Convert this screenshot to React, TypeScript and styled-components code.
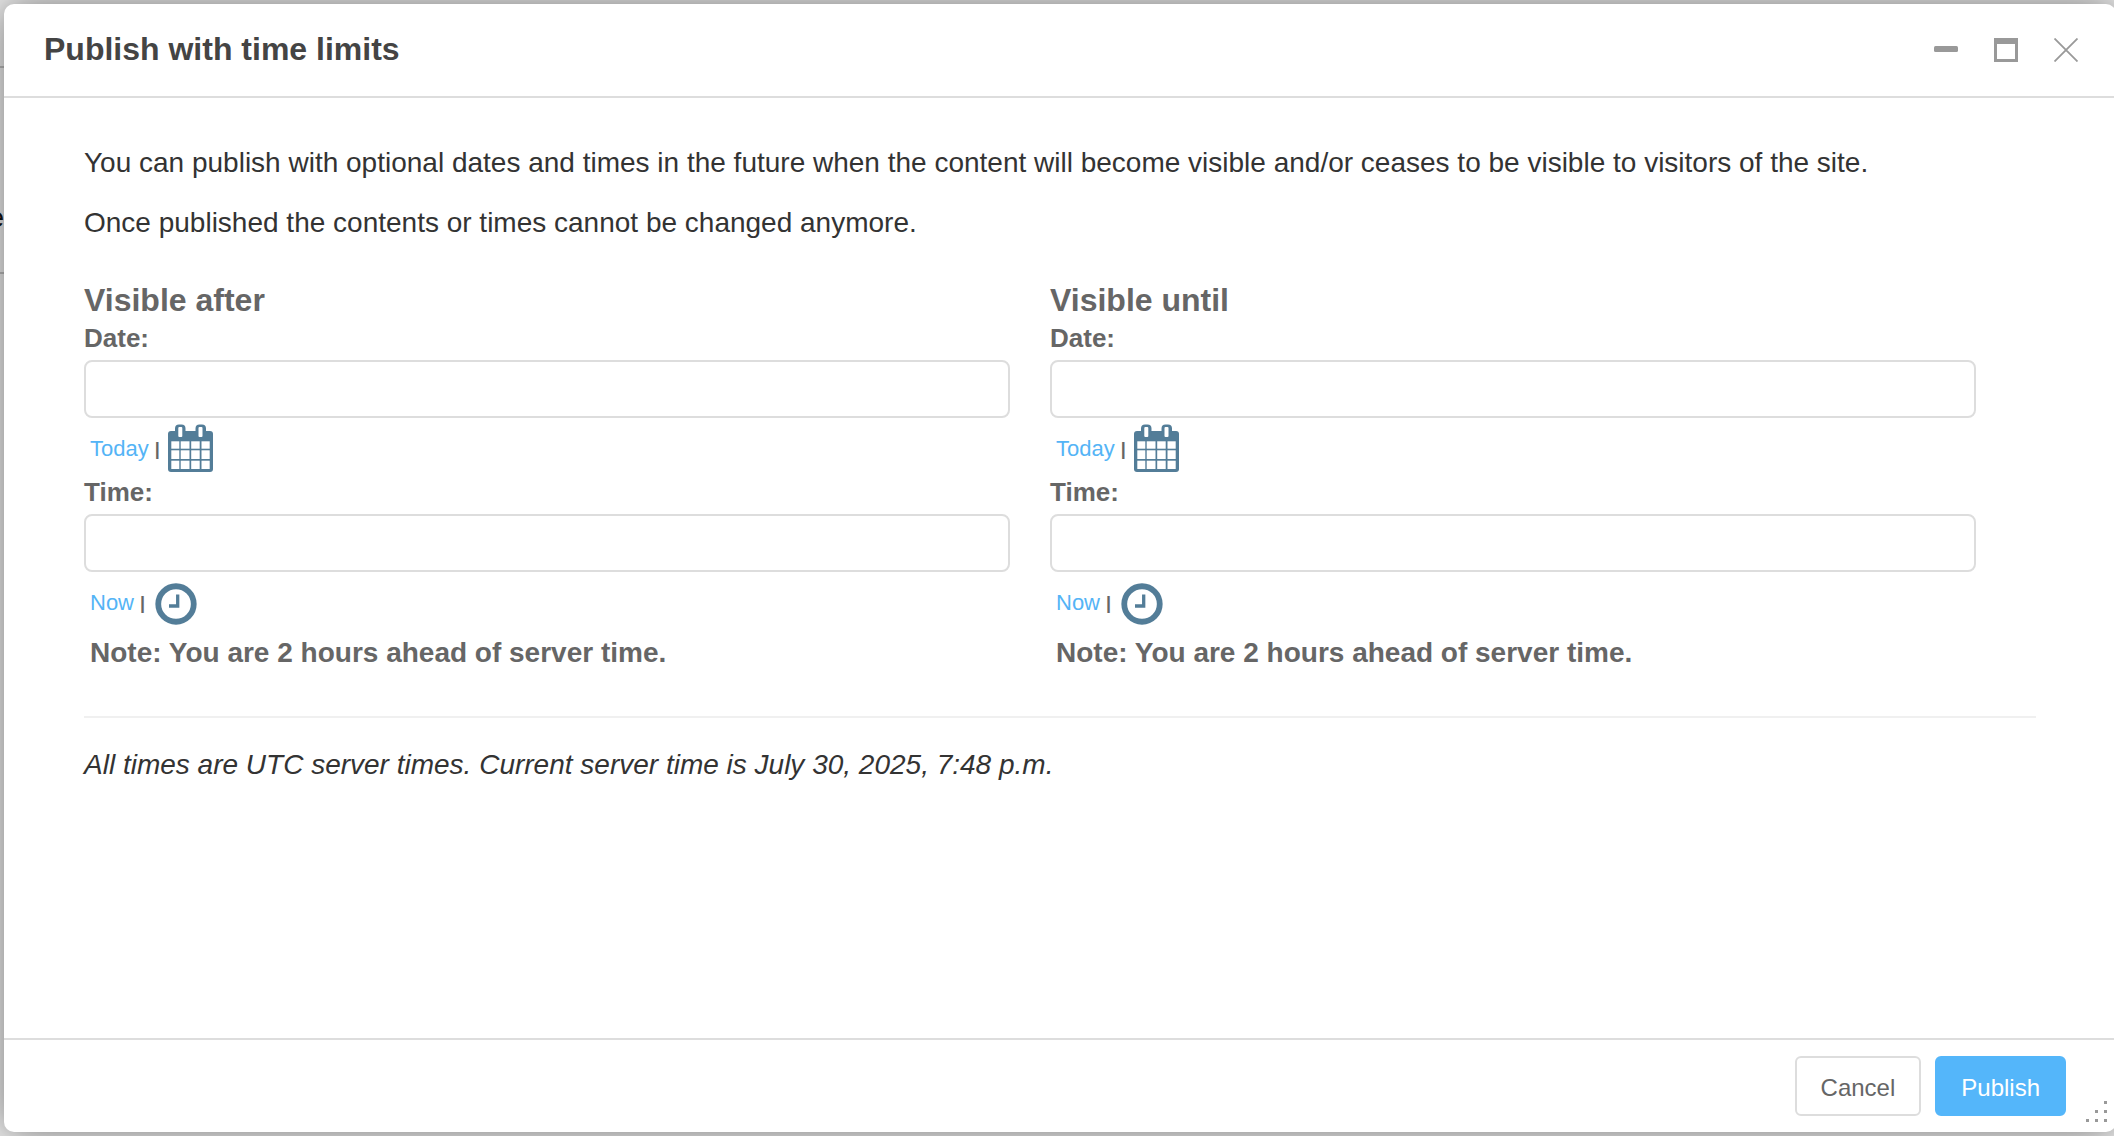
import React, { useId } from "react";
import styled, { createGlobalStyle } from "styled-components";

const GlobalStyle = createGlobalStyle`
  * { box-sizing: border-box; }
  body {
    margin: 0;
    background: #ececec;
    font-family: "Liberation Sans", Arial, Helvetica, sans-serif;
    color: #333;
    overflow: hidden;
  }
`;

const Stage = styled.div`
  position: relative;
  display: flex;
  min-height: 100vh;
  overflow: hidden;
`;

/* The page that stays visible at the left of the dialog. */
const Backdrop = styled.div`
  flex: none;
  width: 4px;
  padding-top: 66px;
`;

const BackdropRow = styled.div`
  display: flex;
  align-items: center;
  justify-content: flex-end;
  height: 208px;
  padding-top: 96px;
  overflow: hidden;
  border: solid #bbb;
  border-width: 2px 0;
  font-size: 28px;
  line-height: 40px;
  color: #111;
`;

const Dialog = styled.section`
  position: relative;
  display: flex;
  flex-direction: column;
  flex: 1;
  margin: 4px -2px 4px 0;
  background: #fff;
  border-radius: 10px;
  box-shadow: 0 0 40px rgba(0, 0, 0, 0.5);
`;

const TitleBar = styled.header`
  display: flex;
  align-items: center;
  justify-content: space-between;
  height: 94px;
  padding: 0 38px 0 40px;
  border-bottom: 2px solid #ddd;
`;

const Title = styled.h1`
  margin: 0;
  padding-bottom: 2px;
  font-size: 32px;
  line-height: 40px;
  color: #444;
`;

const WindowControls = styled.div`
  display: flex;
  gap: 36px;
`;

const IconButton = styled.button`
  display: block;
  padding: 0;
  border: 0;
  background: none;
  color: #999;
  cursor: pointer;

  svg { display: block; }
`;

const Content = styled.main`
  flex: 1;
  padding: 45px 80px;
`;

const Paragraph = styled.p`
  margin: 0 0 20px;
  font-size: 28px;
  line-height: 40px;
`;

const Columns = styled.div`
  display: grid;
  grid-template-columns: 1fr 1fr;
  padding: 17px 20px 0 0;
`;

const Column = styled.fieldset`
  min-width: 0;
  margin: 0;
  padding: 0 40px 0 0;
  border: 0;
  color: #666;
`;

const Legend = styled.legend`
  padding: 0;
  font-size: 32px;
  font-weight: bold;
  line-height: 40px;
`;

const Label = styled.label`
  display: block;
  margin-bottom: 4px;
  font-size: 26px;
  font-weight: bold;
  line-height: 36px;
`;

const TextInput = styled.input`
  display: block;
  width: 100%;
  height: 58px;
  padding: 0 12px;
  border: 2px solid #ddd;
  border-radius: 8px;
  background: #fff;
  font: inherit;
  font-size: 28px;
`;

const Shortcuts = styled.div`
  display: flex;
  align-items: center;
  height: 56px;
  padding: 6px 0 0 6px;
  font-size: 22px;
  line-height: 28px;
`;

const ShortcutLink = styled.a`
  color: #54b4f6;
  text-decoration: none;
`;

const Separator = styled.span`
  margin: 0 8px 0 6px;
  font-size: 18px;
  font-weight: bold;
`;

const Note = styled.div`
  padding-left: 6px;
  font-size: 28px;
  font-weight: bold;
  line-height: 50px;
`;

const Rule = styled.hr`
  margin: 38px 0 27px;
  border: 0;
  border-top: 2px solid #f0f0f0;
`;

const ServerTime = styled(Paragraph)`
  font-style: italic;
`;

const Footer = styled.footer`
  display: flex;
  justify-content: flex-end;
  gap: 14px;
  padding: 16px 50px;
  border-top: 2px solid #ddd;
`;

const Button = styled.button<{ $primary?: boolean }>`
  height: 60px;
  padding: 3px 24px 0;
  border: 2px solid ${(p) => (p.$primary ? "#54b6fa" : "#ddd")};
  border-radius: 6px;
  background: ${(p) => (p.$primary ? "#54b6fa" : "#fff")};
  color: ${(p) => (p.$primary ? "#fff" : "#666")};
  font: inherit;
  font-size: 24px;
  cursor: pointer;
`;

const ResizeGrip = styled.svg`
  position: absolute;
  right: 9px;
  bottom: 10px;
`;

const CalendarIcon = () => (
  <svg width="45" height="50" viewBox="0 0 45 50" aria-hidden="true">
    <rect y="7" width="45" height="41" rx="3" fill="#537d98" />
    <path d="M7 12V4.500a4 4 0 0 1 4-4h2.500a4 4 0 0 1 4 4V12zM27.500 12V4.500a4 4 0 0 1 4-4h2.500a4 4 0 0 1 4 4V12z" fill="#537d98" />
    <rect x="10.300" y="3" width="4" height="10" rx="1" fill="#fff" />
    <rect x="30.500" y="3" width="4" height="10" rx="1" fill="#fff" />
    {[[17.3, 7.4], [26.3, 8.7], [36.7, 8.3]].map(([y, h]) =>
      [[3.3, 8], [12.7, 8.8], [23.2, 8.5], [33.5, 8.2]].map(([x, w]) => (
        <rect key={`${x}-${y}`} x={x} y={y} width={w} height={h} fill="#fff" />
      )),
    )}
  </svg>
);

const ClockIcon = () => (
  <svg width="44" height="48" viewBox="0 0 44 48" aria-hidden="true">
    <circle cx="23" cy="25" r="17.750" fill="none" stroke="#537d98" strokeWidth="5.800" />
    <path d="M24.700 15.500V27H16" fill="none" stroke="#537d98" strokeWidth="3.300" />
  </svg>
);

type LimitProps = { title: string };

function TimeLimit({ title }: LimitProps) {
  const id = useId();
  return (
    <Column>
      <Legend>{title}</Legend>
      <Label htmlFor={`${id}-date`}>Date:</Label>
      <TextInput id={`${id}-date`} type="text" />
      <Shortcuts>
        <ShortcutLink href="#">Today</ShortcutLink>
        <Separator>|</Separator>
        <IconButton type="button" aria-label="Choose a date">
          <CalendarIcon />
        </IconButton>
      </Shortcuts>
      <Label htmlFor={`${id}-time`}>Time:</Label>
      <TextInput id={`${id}-time`} type="text" />
      <Shortcuts>
        <ShortcutLink href="#">Now</ShortcutLink>
        <Separator>|</Separator>
        <IconButton type="button" aria-label="Choose a time">
          <ClockIcon />
        </IconButton>
      </Shortcuts>
      <Note>Note: You are 2 hours ahead of server time.</Note>
    </Column>
  );
}

export default function App() {
  return (
    <Stage>
      <GlobalStyle />
      <Backdrop aria-hidden="true">
        <BackdropRow>e</BackdropRow>
      </Backdrop>
      <Dialog role="dialog" aria-labelledby="dialog-title">
        <TitleBar>
          <Title id="dialog-title">Publish with time limits</Title>
          <WindowControls>
            <IconButton type="button" aria-label="Minimize">
              <svg width="24" height="24" viewBox="0 0 24 24">
                <rect y="8" width="24" height="6" rx="1.500" fill="currentColor" />
              </svg>
            </IconButton>
            <IconButton type="button" aria-label="Maximize">
              <svg width="24" height="24" viewBox="0 0 24 24">
                <path d="M0 0H24V24H0ZM3 6V21H21V6Z" fill="currentColor" fillRule="evenodd" />
              </svg>
            </IconButton>
            <IconButton type="button" aria-label="Close">
              <svg width="24" height="24" viewBox="0 0 24 24">
                <path d="M0.500 0.500L23.500 23.500M23.500 0.500L0.500 23.500" stroke="currentColor" strokeWidth="1.800" />
              </svg>
            </IconButton>
          </WindowControls>
        </TitleBar>
        <Content>
          <Paragraph>
            You can publish with optional dates and times in the future when the content will become
            visible and/or ceases to be visible to visitors of the site.
          </Paragraph>
          <Paragraph>Once published the contents or times cannot be changed anymore.</Paragraph>
          <Columns>
            <TimeLimit title="Visible after" />
            <TimeLimit title="Visible until" />
          </Columns>
          <Rule />
          <ServerTime>
            All times are UTC server times. Current server time is July 30, 2025, 7:48 p.m.
          </ServerTime>
        </Content>
        <Footer>
          <Button type="button">Cancel</Button>
          <Button type="button" $primary>
            Publish
          </Button>
        </Footer>
        <ResizeGrip width="21" height="21" viewBox="0 0 21 21" aria-hidden="true">
          <path d="M18 0h3v3h-3zM9 9h3v3H9zM18 9h3v3h-3zM0 18h3v3H0zM9 18h3v3H9zM18 18h3v3h-3z" fill="#999" />
        </ResizeGrip>
      </Dialog>
    </Stage>
  );
}
